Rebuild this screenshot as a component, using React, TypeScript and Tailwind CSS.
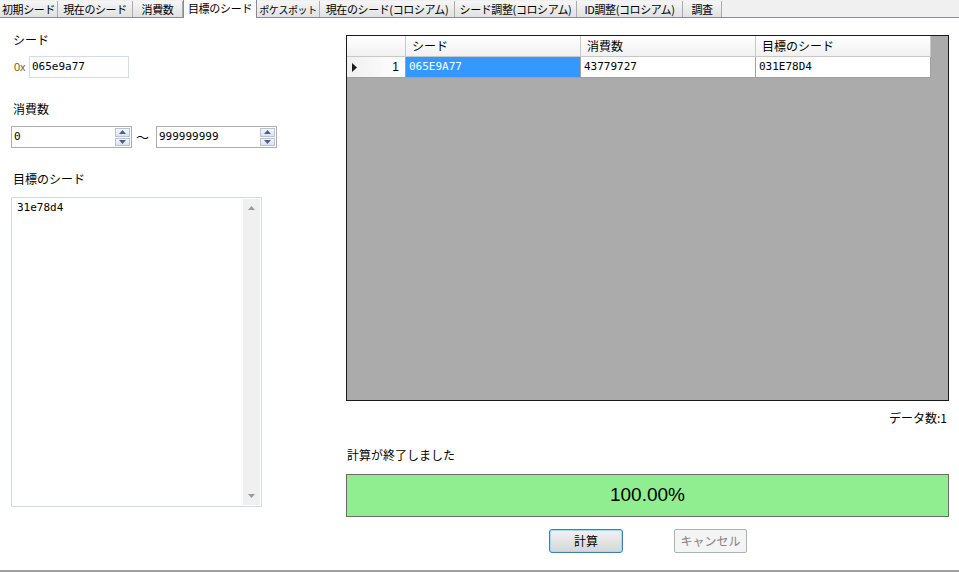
import React from "react";

const JP = { fontFamily: '"Noto Sans CJK JP", "Noto Sans", sans-serif' };
const MONO = { fontFamily: '"DejaVu Sans Mono", "Liberation Mono", monospace' };

const tabs: { label: string; w: number; sel?: boolean; small?: boolean }[] = [
  { label: "初期シード", w: 58 },
  { label: "現在のシード", w: 75 },
  { label: "消費数", w: 50 },
  { label: "目標のシード", w: 74, sel: true },
  { label: "ポケスポット", w: 63, small: true },
  { label: "現在のシード(コロシアム)", w: 135 },
  { label: "シード調整(コロシアム)", w: 122 },
  { label: "ID調整(コロシアム)", w: 106 },
  { label: "調査", w: 39 },
];

function Spin({ value }: { value: string }) {
  return (
    <div className="flex h-[22px] w-[121px] border border-[#abadb3] bg-white">
      <div className="flex-1 pl-[2px] text-[11px] leading-[20px] text-black" style={MONO}>
        {value}
      </div>
      <div className="flex w-[16px] flex-col gap-[1px] py-[1px] pr-[1px]">
        <div className="flex flex-1 items-center justify-center border border-[#b8c2d1] bg-gradient-to-b from-[#f3f6fb] to-[#dde3ee]">
          <svg width="7" height="4" viewBox="0 0 7 4"><path d="M0 4 L3.5 0 L7 4 Z" fill="#4d6185" /></svg>
        </div>
        <div className="flex flex-1 items-center justify-center border border-[#b8c2d1] bg-gradient-to-b from-[#f3f6fb] to-[#dde3ee]">
          <svg width="7" height="4" viewBox="0 0 7 4"><path d="M0 0 L3.5 4 L7 0 Z" fill="#4d6185" /></svg>
        </div>
      </div>
    </div>
  );
}

export default function App() {
  return (
    <div className="flex h-[573px] w-[959px] flex-col overflow-hidden bg-white text-[12px] text-black" style={JP}>
      {/* tab strip */}
      <div className="relative flex h-[18px] items-end border-b border-[#898c95] bg-[#f0f0f0]">
        {tabs.map((t) =>
          t.sel ? (
            <div
              key={t.label}
              className="relative z-10 -mb-[1px] flex h-[19px] shrink-0 items-start justify-center border-x border-t border-[#898c95] bg-white pt-[1px] text-[11px] leading-[15px] tracking-[-0.3px] whitespace-nowrap"
              style={{ width: t.w }}
            >
              {t.label}
            </div>
          ) : (
            <div
              key={t.label}
              className={
                "flex h-[16px] shrink-0 items-center justify-center overflow-hidden border-r border-[#acacac] bg-gradient-to-b from-[#f6f6f6] to-[#e1e1e1] leading-[15px] tracking-[-0.4px] whitespace-nowrap " +
                (t.small ? "text-[10px]" : "text-[11px]")
              }
              style={{ width: t.w }}
            >
              {t.label}
            </div>
          )
        )}
      </div>

      {/* body */}
      <div className="flex flex-1">
        {/* left */}
        <div className="flex w-[346px] flex-col pl-[11px]">
          <div className="mt-[14px] pl-[2px] leading-[16px]">シード</div>
          <div className="mt-[8px] flex items-center">
            <span className="w-[18px] pl-[3px] text-[11px] text-[#7a5a17]" style={{ fontFamily: '"Liberation Sans", sans-serif' }}>0x</span>
            <div className="h-[22px] w-[100px] border border-[#d5dbe5] pl-[2px] text-[11px] leading-[20px]" style={MONO}>
              065e9a77
            </div>
          </div>
          <div className="mt-[23px] pl-[2px] leading-[16px]">消費数</div>
          <div className="mt-[9px] flex items-center">
            <Spin value="0" />
            <div className="w-[24px] pl-[4px] text-[13px] leading-[14px]">～</div>
            <Spin value="999999999" />
          </div>
          <div className="mt-[23px] pl-[2px] leading-[16px]">目標のシード</div>
          <div className="mt-[10px] flex h-[310px] w-[251px] border border-[#d5d9e0] bg-white">
            <div className="flex-1 pl-[5px] pt-[3px] text-[11px] leading-[14px]" style={MONO}>
              31e78d4
            </div>
            <div className="my-[1px] mr-[1px] flex w-[17px] flex-col items-center justify-between bg-[#f0f0f0] py-[7px]">
              <svg width="7" height="4" viewBox="0 0 7 4"><path d="M0 4 L3.5 0 L7 4 Z" fill="#9a9a9a" /></svg>
              <svg width="7" height="4" viewBox="0 0 7 4"><path d="M0 0 L3.5 4 L7 0 Z" fill="#9a9a9a" /></svg>
            </div>
          </div>
        </div>

        {/* right */}
        <div className="flex w-[603px] flex-col">
          <div className="mt-[17px] flex h-[366px] flex-col border border-[#1a1a1a] bg-[#ababab]">
            {/* header */}
            <div className="flex h-[21px]">
              <div className="w-[59px] border-b border-r border-[#c8c8c8] bg-gradient-to-b from-[#ffffff] to-[#f1f1f1]" />
              {["シード", "消費数", "目標のシード"].map((h) => (
                <div
                  key={h}
                  className="w-[175px] border-b border-r border-[#c8c8c8] bg-gradient-to-b from-[#ffffff] to-[#f1f1f1] pl-[6px] leading-[20px]"
                >
                  {h}
                </div>
              ))}
            </div>
            {/* row */}
            <div className="flex h-[21px]">
              <div className="flex w-[59px] items-center justify-between border-b border-r border-[#a0a0a0] bg-gradient-to-r from-[#f0f0f0] to-[#ffffff] pl-[5px] pr-[6px]">
                <svg width="5" height="9" viewBox="0 0 5 9"><path d="M0 0 L5 4.5 L0 9 Z" fill="#1a1a1a" /></svg>
                <span className="text-[12px]" style={{ fontFamily: '"Liberation Sans", sans-serif' }}>1</span>
              </div>
              <div className="w-[175px] border-b border-r border-[#a0a0a0] bg-[#3399ff] pl-[3px] text-[11px] leading-[20px] text-white" style={MONO}>
                065E9A77
              </div>
              <div className="w-[175px] border-b border-r border-[#a0a0a0] bg-white pl-[3px] text-[11px] leading-[20px]" style={MONO}>
                43779727
              </div>
              <div className="w-[175px] border-b border-r border-[#a0a0a0] bg-white pl-[3px] text-[11px] leading-[20px]" style={MONO}>
                031E78D4
              </div>
            </div>
          </div>
          <div className="mt-[9px] pr-[2px] text-right leading-[16px]">データ数:1</div>
          <div className="mt-[21px] pl-[1px] leading-[16px]">計算が終了しました</div>
          <div
            className="mt-[11px] flex h-[43px] w-[603px] items-center justify-center border border-[#6b6b6b] bg-[#90ee90] text-[19px]"
            style={{ fontFamily: '"Liberation Sans", sans-serif' }}
          >
            100.00%
          </div>
          <div className="mt-[12px] flex">
            <div className="ml-[203px] flex h-[24px] w-[74px] items-center justify-center rounded-[3px] border border-[#3c7fb1] bg-gradient-to-b from-[#f2f2f2] to-[#d6d6d6] shadow-[inset_0_0_0_1px_#9fdcf8]">
              計算
            </div>
            <div className="ml-[51px] flex h-[24px] w-[73px] items-center justify-center rounded-[2px] border border-[#adb2b5] bg-[#f4f4f4] text-[#838383]">
              キャンセル
            </div>
          </div>
        </div>
      </div>
      <div className="h-[2px] bg-[#a0a0a0]" />
      <div className="h-[1px] bg-white" />
    </div>
  );
}
